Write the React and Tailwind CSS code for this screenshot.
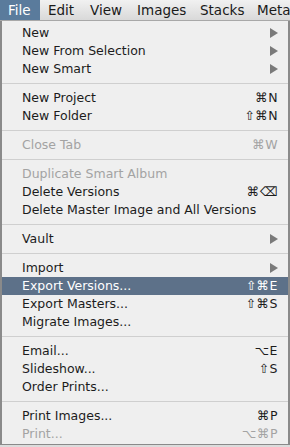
import React from "react";

const font = { fontFamily: '"DejaVu Sans", "Liberation Sans", sans-serif' };

const items = [
  { label: "New", arrow: true },
  { label: "New From Selection", arrow: true },
  { label: "New Smart", arrow: true },
  "sep",
  { label: "New Project", keys: "⌘N" },
  { label: "New Folder", keys: "⇧⌘N" },
  "sep",
  { label: "Close Tab", keys: "⌘W", disabled: true },
  "sep",
  { label: "Duplicate Smart Album", disabled: true },
  { label: "Delete Versions", keys: "⌘⌫" },
  { label: "Delete Master Image and All Versions" },
  "sep",
  { label: "Vault", arrow: true },
  "sep",
  { label: "Import", arrow: true },
  { label: "Export Versions...", keys: "⇧⌘E", active: true },
  { label: "Export Masters...", keys: "⇧⌘S" },
  { label: "Migrate Images..." },
  "sep",
  { label: "Email...", keys: "⌥E" },
  { label: "Slideshow...", keys: "⇧S" },
  { label: "Order Prints..." },
  "sep",
  { label: "Print Images...", keys: "⌘P" },
  { label: "Print...", keys: "⌥⌘P", disabled: true },
];

function Arrow() {
  return (
    <svg width="8" height="10" viewBox="0 0 8 10">
      <path d="M0 0 L8 5 L0 10 Z" fill="#7a7a7a" />
    </svg>
  );
}

function MenuRow({ item }) {
  const color = item.active
    ? "bg-[#5d7189] text-white"
    : item.disabled
    ? "text-[#a3a3a3]"
    : "text-[#1c1c1c]";
  return (
    <div className={`flex h-[18px] items-center justify-between pl-5 pr-[10px] text-[12.5px] ${color}`}>
      <span>{item.label}</span>
      {item.arrow && <Arrow />}
      {item.keys && <span className="tracking-[0.5px]">{item.keys}</span>}
    </div>
  );
}

export default function App() {
  return (
    <div className="w-[290px] h-[447px] bg-[#dcdcdc] overflow-hidden" style={font}>
      {/* Menu bar */}
      <div className="flex h-[21px] items-center overflow-hidden bg-gradient-to-b from-[#f1f1f1] to-[#d9d9d9] border-b border-[#a8a8a8] text-[13.5px] text-[#1a1a1a] whitespace-nowrap">
        <div className="h-full w-[40px] shrink-0 flex items-center px-2 bg-[#5a7b9c] text-white">File</div>
        <div className="w-[42px] shrink-0 pl-2">Edit</div>
        <div className="w-[47px] shrink-0 pl-2">View</div>
        <div className="w-[63px] shrink-0 pl-2">Images</div>
        <div className="w-[57px] shrink-0 pl-2">Stacks</div>
        <div className="shrink-0 pl-2">Meta</div>
      </div>

      {/* Menu */}
      <div className="bg-[#efefef] border-x-2 border-b border-[#8a8a8a] pt-[3px] pb-[1px]">
        {items.map((item, i) =>
          item === "sep" ? (
            <div key={i} className="h-[11px] flex items-center">
              <div className="h-px w-full bg-[#cfcfcf]" />
            </div>
          ) : (
            <MenuRow key={i} item={item} />
          )
        )}
      </div>
    </div>
  );
}
